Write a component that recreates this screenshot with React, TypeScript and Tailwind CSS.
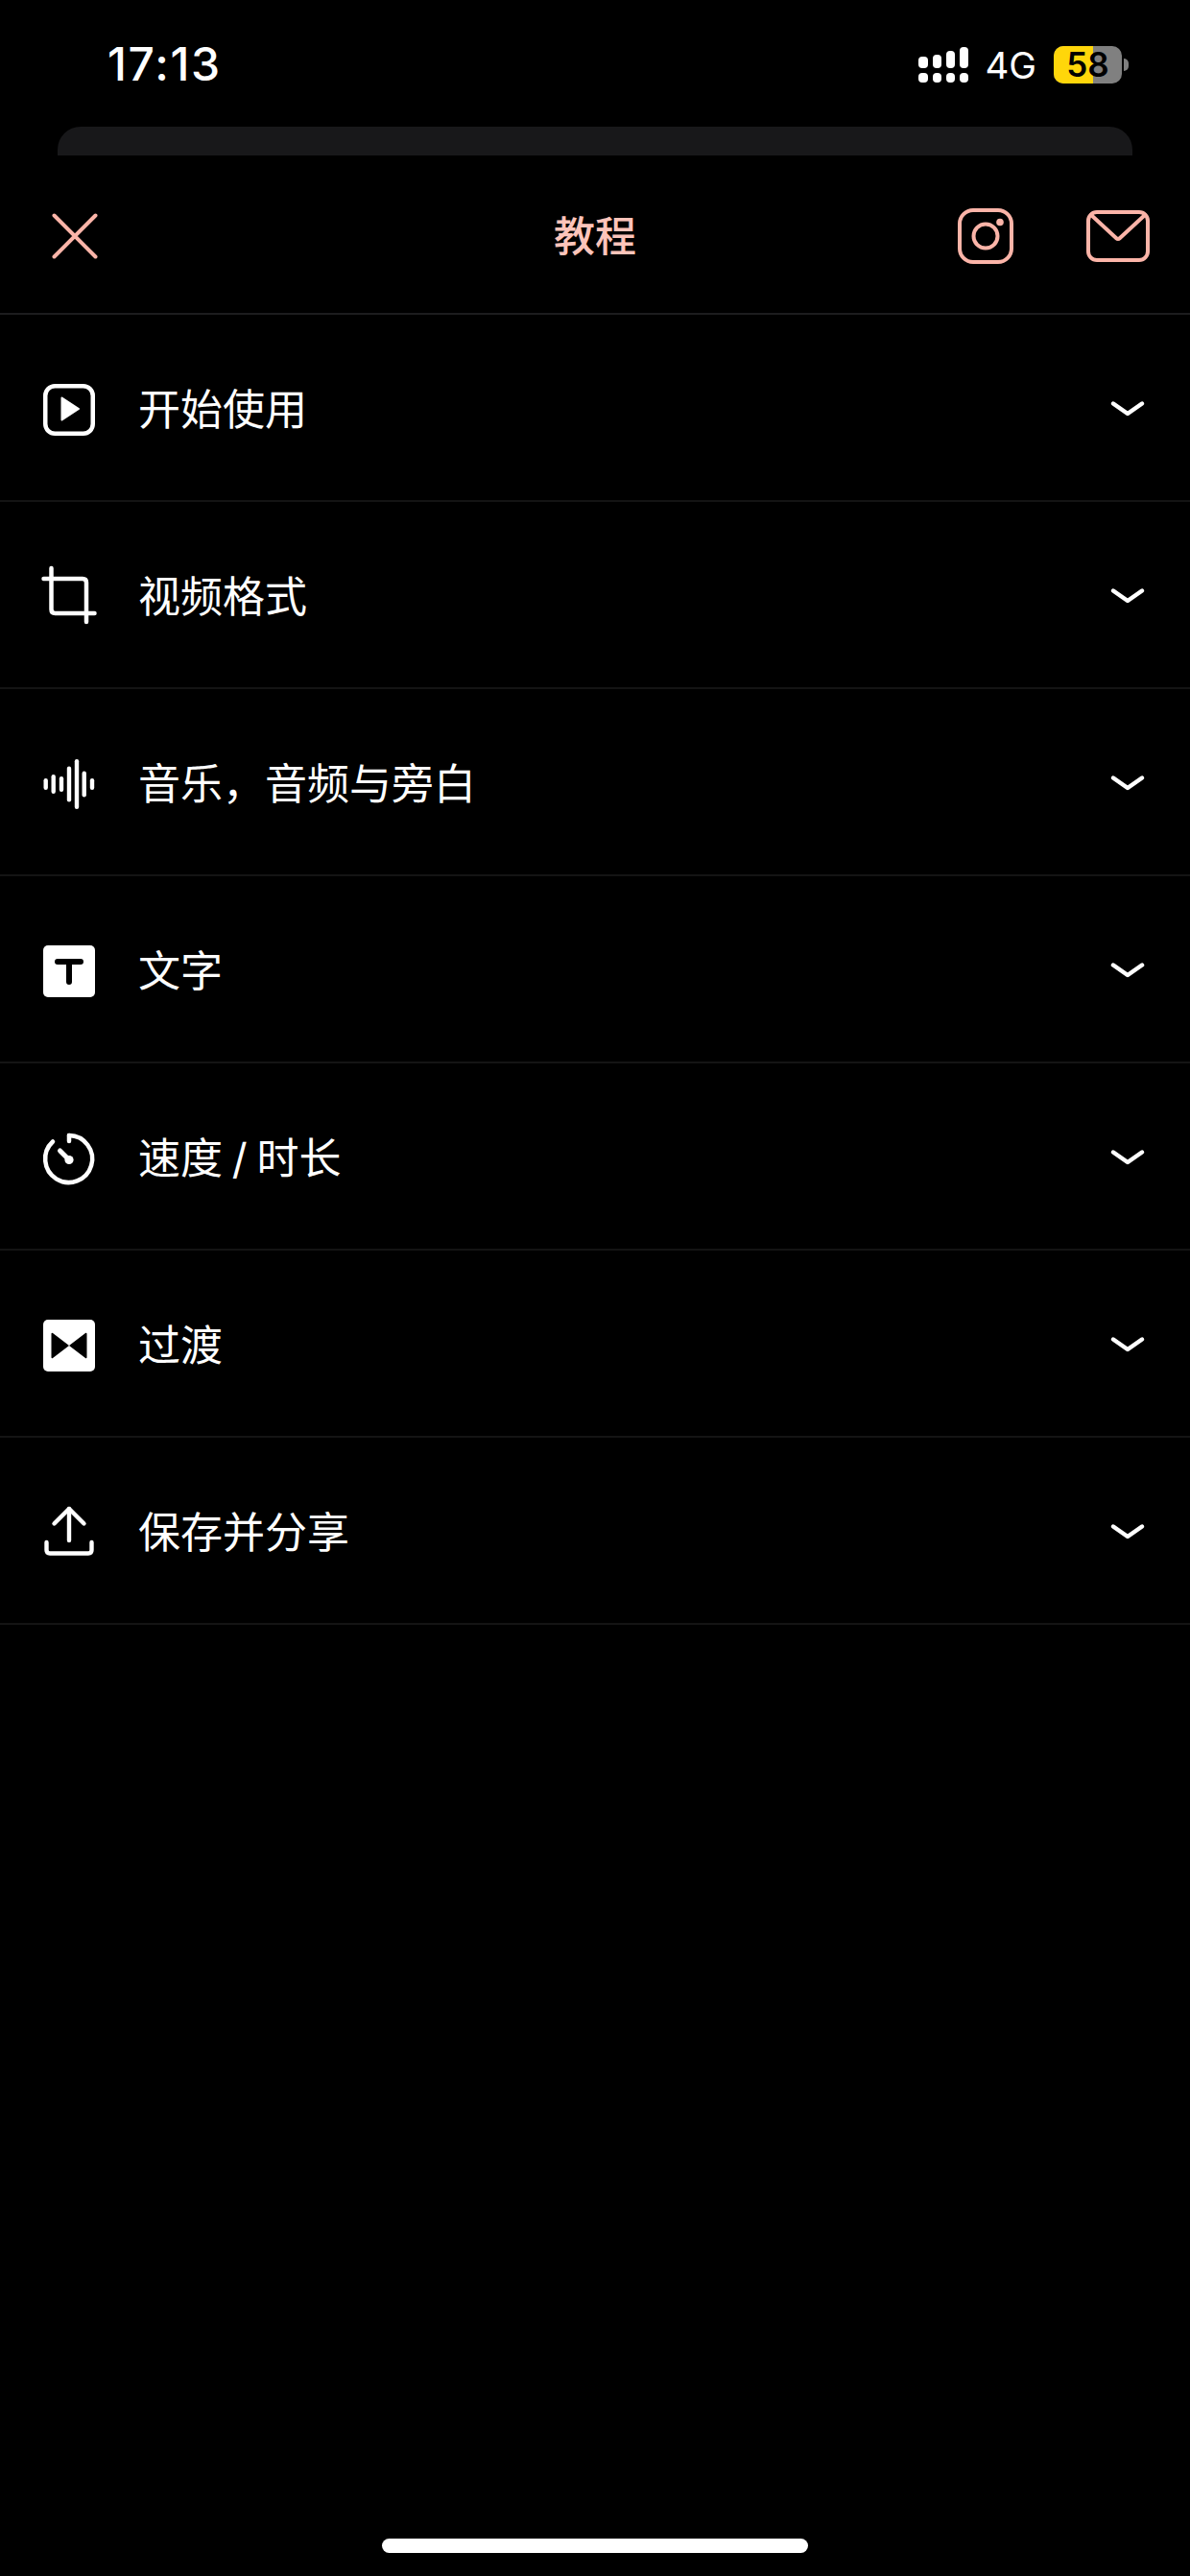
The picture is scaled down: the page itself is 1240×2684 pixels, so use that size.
const font = "font-['Inter','Noto_Sans_CJK_SC',sans-serif]";

function Play() {
  return (
    <svg viewBox="0 0 54 54" className="w-[54px] h-[54px] overflow-visible" fill="none">
      <rect x="2.25" y="2.25" width="49.5" height="49.5" rx="10" stroke="white" strokeWidth="4.5" />
      <path d="M19.5 14.5 L37 26 L19.5 37.5 Z" fill="white" stroke="white" strokeWidth="2" strokeLinejoin="round" />
    </svg>
  );
}
function Crop() {
  return (
    <svg viewBox="0 2 58 62" className="w-[58px] h-[62px] overflow-visible" fill="none" stroke="white" strokeWidth="4.5" strokeLinecap="round" strokeLinejoin="round">
      <path d="M2.5 14 H43 Q47 14 47 18 V59" />
      <path d="M10.5 3 V46 Q10.5 50 14.5 50 H55.5" />
    </svg>
  );
}
function Wave() {
  const bars = [[2.7, 12], [10.7, 20], [19, 16], [27, 37], [35, 52], [42.7, 27], [51, 12]];
  return (
    <svg viewBox="0 0 54 54" className="w-[54px] h-[54px] overflow-visible" stroke="white" strokeWidth="4.4" strokeLinecap="round">
      {bars.map(([x, h]) => (
        <line key={x} x1={x} x2={x} y1={27 + 2.2 - h / 2} y2={27 - 2.2 + h / 2} />
      ))}
    </svg>
  );
}
function TextIcon() {
  return (
    <svg viewBox="0 1 54 54" className="w-[54px] h-[54px] overflow-visible">
      <rect y="1" width="54" height="54" rx="5" fill="white" />
      <path d="M15 18 H39 M27 18 V39" fill="none" stroke="black" strokeWidth="6" strokeLinecap="round" />
    </svg>
  );
}
function Speed() {
  return (
    <svg viewBox="0 0 54 54" className="w-[54px] h-[54px] overflow-visible" fill="none" stroke="white" strokeWidth="4.5" strokeLinecap="round">
      <path d="M27 3 A24.5 24.5 0 1 1 10 9.5" />
      <path d="M27 3 V9" />
      <path d="M17.5 19 L27 28.5" strokeWidth="5" />
      <circle cx="27" cy="28.5" r="4.6" fill="white" stroke="none" />
    </svg>
  );
}
function Transition() {
  return (
    <svg viewBox="0 1 54 54" className="w-[54px] h-[54px] overflow-visible">
      <rect y="1" width="54" height="54" rx="5" fill="white" />
      <path d="M8.5 16 Q8.5 14 10 15 L27 28 L44 15 Q45.5 14 45.5 16 V40 Q45.5 42 44 41 L27 28 L10 41 Q8.5 42 8.5 40 Z" fill="black" />
    </svg>
  );
}
function Share() {
  return (
    <svg viewBox="0 1 54 54" className="w-[54px] h-[54px] overflow-visible" fill="none" stroke="white" strokeWidth="4.4" strokeLinecap="round" strokeLinejoin="round">
      <path d="M27 3 V36" />
      <path d="M11.5 18.5 L27 3 L42.5 18.5" />
      <path d="M3.5 38 V46 Q3.5 49.5 7 49.5 H47 Q50.5 49.5 50.5 46 V38" />
    </svg>
  );
}
function Chevron() {
  return (
    <svg viewBox="0 0 38 20" className="w-[38px] h-[20px] overflow-visible -translate-y-[1px]" fill="none" stroke="white" strokeWidth="4.5" strokeLinecap="round" strokeLinejoin="round">
      <path d="M4 4.5 L19 15 L34 4.5" />
    </svg>
  );
}

const rows = [
  { icon: <Play />, label: "开始使用" },
  { icon: <Crop />, label: "视频格式" },
  { icon: <Wave />, label: "音乐\uFF0C音频与旁白" },
  { icon: <TextIcon />, label: "文字" },
  { icon: <Speed />, label: "速度 / 时长" },
  { icon: <Transition />, label: "过渡" },
  { icon: <Share />, label: "保存并分享" },
];

function Signal() {
  const heights = [12, 14, 18, 22];
  return (
    <div className="flex gap-[5px] flex-col w-[52px]">
      <div className="flex justify-between items-end">
        {heights.map((h) => (
          <div key={h} className="w-[9.5px] bg-white rounded-[4px]" style={{ height: h }} />
        ))}
      </div>
      <div className="flex justify-between">
        {heights.map((h) => (
          <div key={h} className="w-[9.5px] h-[10px] bg-white rounded-[4px]" />
        ))}
      </div>
    </div>
  );
}

export default function App() {
  return (
    <div className={`${font} w-[1240px] h-[2684px] bg-black relative overflow-hidden text-white`}>
      <div className="h-[132px] flex items-start justify-between pl-[112px] pr-[64px] pt-[38px]">
        <span className="text-[48px] leading-[58px] font-medium tracking-[1.7px]">17:13</span>
        <div className="flex items-center mt-[10px] h-[39px]">
          <Signal />
          <span className="ml-[17px] text-[38.5px] leading-[39px] font-normal translate-y-[1px]">4G</span>
          <div className="ml-[18px] relative w-[71px] h-[39px] rounded-[10px] bg-[#808080] flex items-center justify-center">
            <div className="absolute left-0 top-0 bottom-0 w-[41px] bg-[#ffd60a] rounded-l-[10px]" />
            <span className="relative text-black text-[35px] leading-[39px] font-semibold">58</span>
          </div>
          <div className="ml-[2px] w-[5px] h-[13px] bg-[#808080] rounded-r-[5px]" />
        </div>
      </div>
      <div className="mx-[60px] h-[30px] bg-[#18181a] rounded-t-[24px]" />
      <header className="h-[166px] border-b-2 border-[#1c1c1e] relative flex items-center justify-between pl-[54px] pr-[42px] pt-[3px]">
        <svg viewBox="0 0 48 48" className="w-[48px] h-[48px]" fill="none" stroke="#fbb4a8" strokeWidth="4" strokeLinecap="round">
          <path d="M2.5 2.5 L45.5 45.5 M45.5 2.5 L2.5 45.5" />
        </svg>
        <span className="absolute left-0 right-0 text-center text-[#fcc4ba] text-[43px] font-medium leading-[50px]">教程</span>
        <div className="flex items-center gap-[76px]">
          <svg viewBox="0 0 58 58" className="w-[58px] h-[58px]" fill="none" stroke="#fbb4a8" strokeWidth="4">
            <rect x="2" y="2" width="54" height="54" rx="14" />
            <circle cx="29" cy="29" r="12.5" />
            <circle cx="44" cy="14.5" r="3.8" fill="#fbb4a8" stroke="none" />
          </svg>
          <svg viewBox="0 0 66 54" className="w-[66px] h-[54px]" fill="none" stroke="#fbb4a8" strokeWidth="4" strokeLinejoin="round" strokeLinecap="round">
            <rect x="2" y="2" width="62" height="50" rx="9" />
            <path d="M5 5 L31 29 Q33 31 35 29 L61 5" />
          </svg>
        </div>
      </header>
      <main>
        {rows.map((r) => (
          <div key={r.label} className="h-[195px] border-b-2 border-[#141414] flex items-center pl-[45px] pr-[46px] pt-[5px]">
            <div className="w-[54px] flex justify-center">{r.icon}</div>
            <span className="ml-[45px] flex-1 text-[44px] leading-[52px] font-normal [word-spacing:-2.5px]">{r.label}</span>
            <Chevron />
          </div>
        ))}
      </main>
      <div className="absolute left-[398px] top-[2645px] w-[444px] h-[15px] rounded-full bg-white" />
    </div>
  );
}
